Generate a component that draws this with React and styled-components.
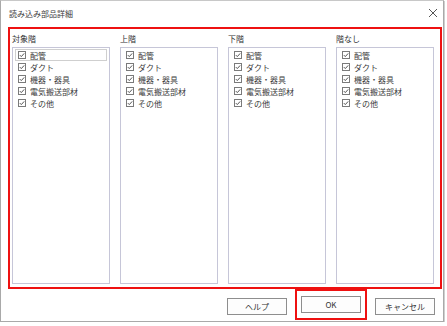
import React from 'react'
import styled, { createGlobalStyle } from 'styled-components'

const GlobalStyle = createGlobalStyle`
    html, body{
        margin: 0;
        padding: 0;
        background: #ffffff;
    }
    body{
        font-family: 'Noto Sans CJK JP', 'Noto Sans', sans-serif;
        color: #333333;
    }
`

const floors = ['対象階', '上階', '下階', '階なし']
const parts = ['配管', 'ダクト', '機器・器具', '電気搬送部材', 'その他']

function CheckIcon(){
    return (
        <svg width="8" height="8" viewBox="0 0 8 8">
            <rect x="0.5" y="0.5" width="7" height="7" fill="#fff" stroke="#7a7a7a" strokeWidth="1"/>
            <path d="M1.8 4.1 L3.3 5.6 L6.2 2.4" fill="none" stroke="#555" strokeWidth="1"/>
        </svg>
    )
}

export default function App(){
    return (
        <>
            <GlobalStyle/>
            <Window>
                <TitleBar>
                    <span>読み込み部品詳細</span>
                    <Close>
                        <svg width="10" height="10" viewBox="0 0 10 10">
                            <path d="M1 1 L9 9 M9 1 L1 9" stroke="#555" strokeWidth="1"/>
                        </svg>
                    </Close>
                </TitleBar>
                <Highlight>
                    {floors.map((floor)=>(
                        <Column key={floor}>
                            <Label>{floor}</Label>
                            <ListBox>
                                {parts.map((part, i)=>(
                                    <Item key={part} focused={floor === '対象階' && i === 0}>
                                        <CheckIcon/>
                                        <span>{part}</span>
                                    </Item>
                                ))}
                            </ListBox>
                        </Column>
                    ))}
                </Highlight>
                <Footer>
                    <Button>ヘルプ</Button>
                    <OkFrame>
                        <Button>OK</Button>
                    </OkFrame>
                    <Button>キャンセル</Button>
                </Footer>
            </Window>
        </>
    )
}

const Window = styled.div`
    width: 442px;
    height: 320px;
    border: 1px solid #a9a9a9;
    border-top-color: #c8c8c8;
    box-shadow: 1px 1px 0 #cfcfcf;
    background: #fff;
    display: flex;
    flex-direction: column;
`

const TitleBar = styled.div`
    height: 28px;
    display: flex;
    align-items: center;
    justify-content: space-between;
    padding: 0 5px 0 8px;
    font-size: 8px;
    color: #3a3a3a;
    margin-top: -2px;
`

const Close = styled.div`
    width: 10px;
    height: 10px;
    display: flex;
    svg{
        display: block;
    }
`

const Highlight = styled.div`
    margin-left: 7px;
    width: 426px;
    height: 255px;
    border: 2px solid #ee1111;
    padding: 0 2px 3px 2px;
    display: grid;
    grid-template-columns: repeat(4, 98px);
    column-gap: 10px;
`

const Column = styled.div`
    display: flex;
    flex-direction: column;
`

const Label = styled.div`
    height: 17px;
    display: flex;
    align-items: center;
    font-size: 8px;
    color: #333;
    padding-top: 1px;
`

const ListBox = styled.div`
    flex: 1;
    border: 1px solid #c6c6d8;
    padding: 1px 2px;
    display: flex;
    flex-direction: column;
`

const Item = styled.div`
    height: 12px;
    display: flex;
    align-items: center;
    gap: 4px;
    padding-left: 2px;
    font-size: 8px;
    color: #3a3a3a;
    border: 1px solid ${p => p.focused ? '#cfcfcf' : 'transparent'};
    box-sizing: border-box;
    white-space: nowrap;
    svg{
        flex: none;
    }
`

const Footer = styled.div`
    display: flex;
    justify-content: flex-end;
    align-items: center;
    gap: 8px;
    padding: 4px 8px 0 0;
`

const OkFrame = styled.div`
    border: 2px solid #ee1111;
    padding: 5px 4px;
    margin-top: -4px;
`

const Button = styled.div`
    width: 60px;
    height: 17px;
    box-sizing: border-box;
    border: 1px solid #8e8e8e;
    background: #fdfdfd;
    display: flex;
    align-items: center;
    justify-content: center;
    font-size: 8px;
    color: #333;
`
